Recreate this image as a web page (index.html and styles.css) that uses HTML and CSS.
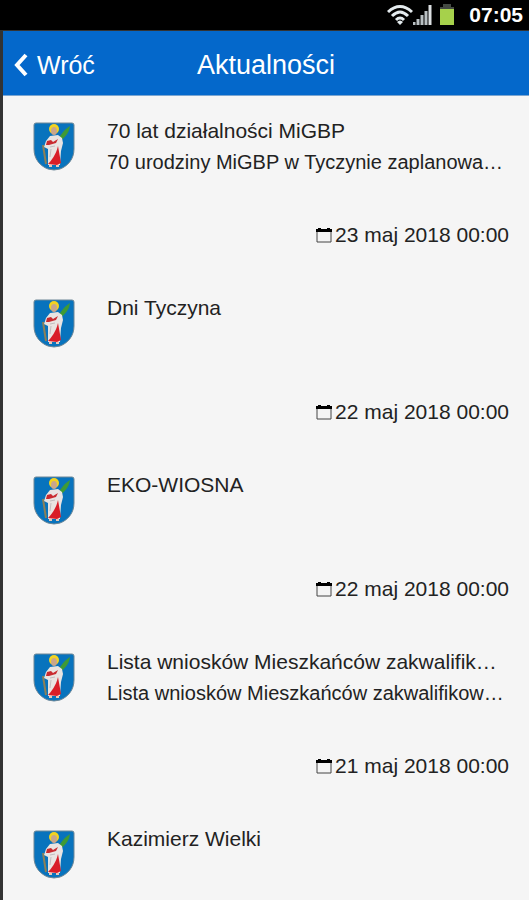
FILE: index.html
```html
<!DOCTYPE html>
<html lang="pl">
<head>
    <meta charset="UTF-8">
    <meta name="viewport" content="width=device-width, initial-scale=1.0">
    <title>Aktualności</title>
    <link rel="stylesheet" href="styles.css">
</head>
<body>
    <!-- Shared icons -->
    <svg class="sprites" aria-hidden="true">
        <symbol id="crest" viewBox="0 0 42 50">
            <path d="M3 2H39Q41 2 41 4V28C41 38 35 45 27 48Q21 50 15 48C7 45 1 38 1 28V4Q1 2 3 2Z" fill="#0873bd" stroke="#6d8797" stroke-width="1"/>
            <path d="M25 19C28 13 31 9 37 5C36 12 32 17 26 20Z" fill="#3f9a35"/>
            <path d="M10 24L13 43" stroke="#8c8058" stroke-width="2"/>
            <circle cx="21" cy="8" r="5" fill="#f3d321"/>
            <ellipse cx="21" cy="10" rx="3" ry="4" fill="#c9a68c"/>
            <path d="M17 15L25 14L29 17L30 22L28 30L27 44H15L15 28L11 26L13 20Z" fill="#e9e4e2"/>
            <path d="M14 20L18 19L20 21L25 18L23 22L16 24L13 24Z" fill="#c92b30"/>
            <path d="M25 25L28 42L24 44L15 43C18 40 23 34 25 25Z" fill="#d91d28"/>
            <path d="M17 26L22 25M18 28L17 36" stroke="#c2bdbf" stroke-width="1" fill="none"/>
            <path d="M16 45H19M23 45H26" stroke="#e8c9b8" stroke-width="2"/>
        </symbol>
        <symbol id="calendar" viewBox="0 0 16 16">
            <path d="M1 3H15V15H1Z" fill="none" stroke="#444" stroke-width="1"/>
            <path d="M0 2H2V1H5V2H11V1H14V2H16V5H0Z" fill="#000"/>
        </symbol>
    </svg>

    <div class="status-bar">
        <svg class="wifi" viewBox="0 0 26 22" aria-hidden="true">
            <g fill="none" stroke="#e4ebee" stroke-width="3">
                <path d="M1 8Q13 -3 25 8"/>
                <path d="M5 12Q13 4 21 12"/>
                <path d="M9 16Q13 12 17 16"/>
            </g>
            <path d="M10 18Q13 15 16 18L13 21Z" fill="#e4ebee"/>
        </svg>
        <svg class="signal" viewBox="0 0 20 22" aria-hidden="true">
            <path d="M1 21V18M5 21V15M9 21V11M13 21V7" stroke="#b9c0c3" stroke-width="3"/>
            <path d="M17 21V1" stroke="#dce0e2" stroke-width="3"/>
        </svg>
        <svg class="battery" viewBox="0 0 16 22" aria-hidden="true">
            <path d="M4 0H12V3H15V6H1V3H4Z" fill="#444a43"/>
            <path d="M1 5H15V21H1Z" fill="#a6d14b"/>
        </svg>
        <span class="clock">07:05</span>
    </div>

    <div class="app">
        <header class="navbar">
            <button class="back" type="button">
                <svg class="chevron" viewBox="0 0 16 24" aria-hidden="true">
                    <path d="M13 2L4 12L13 22" fill="none" stroke="#fff" stroke-width="4"/>
                </svg>
                Wróć
            </button>
            <h1>Aktualności</h1>
        </header>

        <main class="news-list">
            <article class="news">
                <svg class="crest" aria-hidden="true"><use href="#crest"/></svg>
                <div class="text">
                    <h2>70 lat działalności MiGBP</h2>
                    <p>70 urodziny MiGBP w Tyczynie zaplanowa…</p>
                </div>
                <div class="date"><svg class="calendar" aria-hidden="true"><use href="#calendar"/></svg><time datetime="2018-05-23T00:00">23 maj 2018 00:00</time></div>
            </article>
            <article class="news">
                <svg class="crest" aria-hidden="true"><use href="#crest"/></svg>
                <div class="text">
                    <h2>Dni Tyczyna</h2>
                </div>
                <div class="date"><svg class="calendar" aria-hidden="true"><use href="#calendar"/></svg><time datetime="2018-05-22T00:00">22 maj 2018 00:00</time></div>
            </article>
            <article class="news">
                <svg class="crest" aria-hidden="true"><use href="#crest"/></svg>
                <div class="text">
                    <h2>EKO-WIOSNA</h2>
                </div>
                <div class="date"><svg class="calendar" aria-hidden="true"><use href="#calendar"/></svg><time datetime="2018-05-22T00:00">22 maj 2018 00:00</time></div>
            </article>
            <article class="news">
                <svg class="crest" aria-hidden="true"><use href="#crest"/></svg>
                <div class="text">
                    <h2>Lista wniosków Mieszkańców zakwalifik…</h2>
                    <p>Lista wniosków Mieszkańców zakwalifikow…</p>
                </div>
                <div class="date"><svg class="calendar" aria-hidden="true"><use href="#calendar"/></svg><time datetime="2018-05-21T00:00">21 maj 2018 00:00</time></div>
            </article>
            <article class="news">
                <svg class="crest" aria-hidden="true"><use href="#crest"/></svg>
                <div class="text">
                    <h2>Kazimierz Wielki</h2>
                </div>
            </article>
        </main>
    </div>
</body>
</html>
```
FILE: styles.css
```css
* {
    box-sizing: border-box;
}

body {
    font-family: "Liberation Sans", Arial, sans-serif;
    background-color: #f5f5f5;
    color: #222;
    margin: 0;
    display: flex;
    flex-direction: column;
    min-height: 100vh;
}

h1, h2, p {
    margin: 0;
    font-weight: normal;
}

.sprites {
    display: none;
}

/* Phone status bar */
.status-bar {
    display: flex;
    align-items: center;
    justify-content: flex-end;
    flex: none;
    height: 30px;
    padding-right: 6px;
    background-color: #000;
    color: #fff;
}

.wifi {
    width: 26px;
    height: 22px;
}

.signal {
    width: 20px;
    height: 22px;
}

.battery {
    width: 16px;
    height: 22px;
    margin: 0 14px 0 6px;
}

.clock {
    font-size: 21px;
    font-weight: bold;
    line-height: 30px;
}

.app {
    flex: 1;
    border-left: 3px solid #333;
    border-top: 1px solid #333;
}

.navbar {
    display: grid;
    grid-template-columns: 1fr auto 1fr;
    align-items: center;
    height: 65px;
    padding: 4px 10px 0;
    background-color: #0468cb;
    border-bottom: 1px solid #7ba5d0;
    color: #fff;
}

.navbar h1 {
    font-size: 27px;
}

.back {
    display: flex;
    align-items: center;
    gap: 8px;
    justify-self: start;
    padding: 0;
    border: none;
    background: none;
    color: #fff;
    font-family: inherit;
    font-size: 25px;
    cursor: pointer;
}

.chevron {
    width: 16px;
    height: 24px;
}

.news-list {
    padding-top: 19px;
}

.news {
    display: grid;
    grid-template-columns: 42px 1fr;
    grid-template-rows: 105px 30px;
    column-gap: 32px;
    padding: 0 20px 42px 30px;
}

.news:last-child {
    grid-template-rows: auto;
    padding-bottom: 10px;
}

.crest {
    width: 42px;
    height: 50px;
    margin-top: 6px;
}

.text {
    min-width: 0;
    white-space: nowrap;
}

.text h2 {
    font-size: 21px;
    line-height: 32px;
}

.text p {
    font-size: 20px;
    line-height: 30px;
}

.date {
    grid-column: 1 / -1;
    display: flex;
    align-items: center;
    justify-content: flex-end;
    gap: 3px;
    font-size: 21px;
    line-height: 30px;
}

.calendar {
    width: 16px;
    height: 16px;
}
```
